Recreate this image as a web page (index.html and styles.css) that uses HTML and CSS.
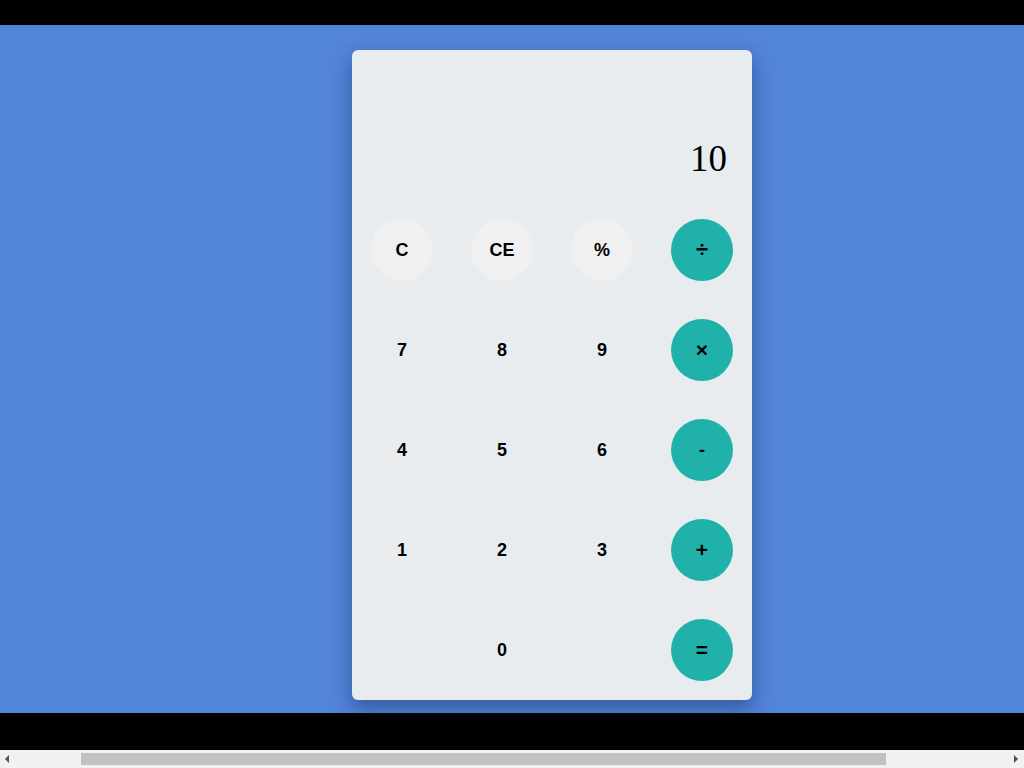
FILE: index.html
```html
<!DOCTYPE html>
<html lang="en">
<head>
<meta charset="utf-8">
<title>Calculator</title>
<link rel="stylesheet" href="styles.css">
</head>
<body>
<main class="stage">
  <section class="calculator">
    <div class="display">10</div>
    <div class="keys">
      <button class="key key-light">C</button>
      <button class="key key-light">CE</button>
      <button class="key key-light">%</button>
      <button class="key key-op key-div">÷</button>
      <button class="key">7</button>
      <button class="key">8</button>
      <button class="key">9</button>
      <button class="key key-op key-times">×</button>
      <button class="key">4</button>
      <button class="key">5</button>
      <button class="key">6</button>
      <button class="key key-op">-</button>
      <button class="key">1</button>
      <button class="key">2</button>
      <button class="key">3</button>
      <button class="key key-op key-plus">+</button>
      <span class="blank"></span>
      <button class="key">0</button>
      <span class="blank"></span>
      <button class="key key-op key-eq">=</button>
    </div>
  </section>
</main>
<div class="hscroll" aria-hidden="true">
  <span class="arrow arrow-left"></span>
  <span class="track"><span class="thumb"></span></span>
  <span class="arrow arrow-right"></span>
</div>
</body>
</html>
```
FILE: styles.css
```css
html, body {
  margin: 0;
  padding: 0;
}
body {
  background: #000;
  width: 1024px;
  height: 768px;
  overflow: hidden;
  display: flex;
  flex-direction: column;
}
.stage {
  margin-top: 25px;
  height: 688px;
  background: #5284d8;
  padding: 25px 0 0 352px;
  box-sizing: border-box;
  flex: none;
}
.calculator {
  width: 400px;
  height: 650px;
  background: #e8ecef;
  border-radius: 6px;
  box-shadow: 0 8px 18px rgba(20, 40, 90, 0.45);
  display: flex;
  flex-direction: column;
}
.display {
  height: 150px;
  box-sizing: border-box;
  display: flex;
  align-items: flex-end;
  justify-content: flex-end;
  padding: 0 25px 19px 0;
  font-family: "Liberation Serif", serif;
  font-size: 37px;
  line-height: 44px;
  color: #000;
}
.keys {
  display: grid;
  grid-template-columns: repeat(4, 100px);
  grid-template-rows: repeat(5, 100px);
  justify-items: center;
  align-items: center;
}
.key {
  width: 62px;
  height: 62px;
  border: none;
  border-radius: 50%;
  background: transparent;
  font-family: "Liberation Sans", Arial, sans-serif;
  font-weight: bold;
  font-size: 18px;
  color: #000;
  padding: 0;
  display: flex;
  align-items: center;
  justify-content: center;
}
.key-light {
  background: #f0f0f0;
}
.key-op {
  background: #20b2aa;
}
.key-div {
  font-size: 22px;
}
.key-times,
.key-plus,
.key-eq {
  font-size: 21px;
}
.hscroll {
  margin-top: auto;
  height: 18px;
  background: #f1f1f1;
  display: flex;
  align-items: center;
  flex: none;
}
.arrow {
  width: 0;
  height: 0;
  border-top: 4px solid transparent;
  border-bottom: 4px solid transparent;
}
.arrow-left {
  margin-left: 5px;
  border-right: 4px solid #505050;
}
.arrow-right {
  margin-right: 6px;
  border-left: 4px solid #505050;
}
.track {
  flex: 1;
  height: 12px;
  padding-left: 72px;
}
.thumb {
  display: block;
  width: 805px;
  height: 12px;
  background: #c1c1c1;
}
```
